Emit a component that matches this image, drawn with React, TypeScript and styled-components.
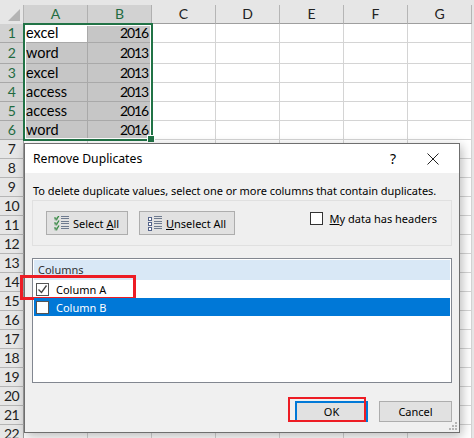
import { createGlobalStyle } from 'styled-components'
import styled from 'styled-components'

const COLS = ['A', 'B', 'C', 'D', 'E', 'F', 'G']
const ROW_HEIGHTS = [19, 21, 19, 19, 19, 19, 19, 19, 19, 19, 19, 19, 19, 19, 19, 19, 19, 19, 19, 19, 19, 19]
const DATA = [
  ['excel', '2016'],
  ['word', '2013'],
  ['excel', '2013'],
  ['access', '2013'],
  ['access', '2016'],
  ['word', '2016'],
]

const Global = createGlobalStyle`
  html, body { margin: 0; padding: 0; background: #fff; overflow: hidden; }
  * { box-sizing: border-box; }
`

const Page = styled.div`
  position: relative;
  width: 474px;
  height: 438px;
  overflow: hidden;
  background: #fff;
`

const Sheet = styled.div`
  display: grid;
  grid-template-columns: 24px repeat(7, 64px) 2px;
  grid-auto-rows: min-content;
  padding-top: 5px;
  background: #e6e6e6;
  font-family: Lato, "Liberation Sans", sans-serif;
`

const Corner = styled.div`
  height: 19px;
  background: #e6e6e6;
  border-right: 1px solid #b5b5b5;
  position: relative;
  &::after {
    content: '';
    position: absolute;
    right: 3px;
    bottom: 3px;
    border-style: solid;
    border-width: 0 0 12px 12px;
    border-color: transparent transparent #b4b4b4 transparent;
  }
`

const ColHead = styled.div<{ $active?: boolean }>`
  height: 19px;
  background: ${p => (p.$active ? '#d2d2d2' : '#e6e6e6')};
  border-right: 1px solid ${p => (p.$active ? '#b0b0b0' : '#b5b5b5')};
  border-bottom: 1px solid ${p => (p.$active ? '#217346' : '#9f9f9f')};
  color: ${p => (p.$active ? '#1f6b41' : '#222')};
  font-size: 14px;
  line-height: 18px;
  text-align: center;
`

const RowHead = styled.div<{ $active?: boolean; $h: number }>`
  height: ${p => p.$h}px;
  background: ${p => (p.$active ? '#d2d2d2' : '#e6e6e6')};
  border-right: 1px solid ${p => (p.$active ? '#217346' : '#9f9f9f')};
  border-bottom: 1px solid ${p => (p.$active ? '#a8a8a8' : '#b5b5b5')};
  color: ${p => (p.$active ? '#1f6b41' : '#222')};
  font-size: 14px;
  letter-spacing: -0.5px;
  line-height: ${p => p.$h - 1}px;
  text-align: center;
`

const Cell = styled.div<{ $h: number; $selected?: boolean; $num?: boolean; $white?: boolean }>`
  height: ${p => p.$h}px;
  padding: 0 3px 0 2px;
  background: ${p => (p.$selected && !p.$white ? '#c6c6c6' : '#fff')};
  border-right: 1px solid ${p => (p.$selected ? '#a9a9a9' : '#d4d4d4')};
  border-bottom: 1px solid ${p => (p.$selected ? '#a9a9a9' : '#d4d4d4')};
  color: #000;
  font-size: ${p => (p.$num ? '14px' : '14.5px')};
  letter-spacing: ${p => (p.$num ? '-1.1px' : '0')};
  line-height: ${p => p.$h - 1}px;
  text-align: ${p => (p.$num ? 'right' : 'left')};
`

const Selection = styled.div`
  position: absolute;
  left: 23px;
  top: 23px;
  width: 130px;
  height: 118px;
  border: 2px solid #217346;
  box-shadow: inset 0 0 0 1px #fff;
  pointer-events: none;
  &::after {
    content: '';
    position: absolute;
    right: -3px;
    bottom: -3px;
    width: 6px;
    height: 6px;
    background: #217346;
    box-shadow: 0 0 0 1px #fff;
  }
`

const Dialog = styled.div`
  position: absolute;
  left: 24px;
  top: 143px;
  width: 436px;
  height: 290px;
  display: flex;
  flex-direction: column;
  background: #f0f0f0;
  border: 1px solid #6f6f6f;
  box-shadow: 2px 3px 10px rgba(0, 0, 0, 0.28);
  font-family: "Noto Sans", "Liberation Sans", sans-serif;
  font-size: 11px;
  color: #000;
`

const TitleBar = styled.div`
  height: 29px;
  flex: none;
  display: flex;
  align-items: center;
  padding: 0 0 0 8px;
  background: #fff;
`

const Title = styled.div`
  flex: 1;
  font-size: 12.2px;
`

const Help = styled.div`
  width: 16px;
  margin-right: 26px;
  text-align: center;
  font-size: 14px;
`

const Close = styled.div`
  width: 12px;
  height: 12px;
  margin-right: 20px;
  display: flex;
`

const Body = styled.div`
  flex: 1;
  display: flex;
  flex-direction: column;
  padding: 8px 7px 0 7px;
`

const Hint = styled.div`
  height: 19px;
  padding-left: 1px;
  letter-spacing: -0.04px;
  line-height: 20px;
  white-space: nowrap;
`

const Group = styled.div`
  height: 46px;
  display: flex;
  align-items: flex-start;
  padding: 10px 0 0 13px;
  background: #efefef;
  border: 1px solid #e0e0e0;
`

const ActionButton = styled.div<{ $w: number }>`
  width: ${p => p.$w}px;
  height: 24px;
  margin-right: 11px;
  display: flex;
  align-items: center;
  gap: 4px;
  padding-left: 7px;
  background: #e1e1e1;
  border: 1px solid #adadad;
  white-space: nowrap;
`

const Headers = styled.label`
  margin-left: auto;
  margin-right: 14px;
  display: flex;
  align-items: center;
  gap: 7px;
  height: 14px;
`

const Box = styled.span<{ $dark?: boolean }>`
  width: 13px;
  height: 13px;
  flex: none;
  display: flex;
  background: #fff;
  border: 1px solid ${p => (p.$dark ? '#333' : '#555')};
`

const Key = styled.span`
  text-decoration: underline;
`

const List = styled.div`
  height: 125px;
  margin-top: 12px;
  padding: 1px;
  background: #fff;
  border: 1px solid #828790;
`

const ListHead = styled.div`
  height: 20px;
  padding-left: 4px;
  background: #d9e8f6;
  color: #333;
  line-height: 20px;
`

const ListRow = styled.div<{ $selected?: boolean }>`
  position: relative;
  height: 18px;
  display: flex;
  align-items: center;
  gap: 7px;
  padding-left: 2px;
  background: ${p => (p.$selected ? '#0078d7' : '#fff')};
  color: ${p => (p.$selected ? '#fff' : '#000')};
`

const RowMark = styled.div`
  position: absolute;
  left: -14px;
  top: -5px;
  width: 116px;
  height: 25px;
  border: 3px solid #ed1c24;
  pointer-events: none;
`

const Footer = styled.div`
  height: 49px;
  display: flex;
  justify-content: flex-end;
  align-items: flex-start;
  gap: 11px;
  padding-top: 18px;
`

const FootButton = styled.div<{ $primary?: boolean }>`
  position: relative;
  width: 73px;
  height: 21px;
  display: flex;
  align-items: center;
  justify-content: center;
  background: #e1e1e1;
  border: ${p => (p.$primary ? '2px solid #0078d7' : '1px solid #adadad')};
`

const OkMark = styled.div`
  position: absolute;
  left: -9px;
  top: -6px;
  width: 78px;
  height: 25px;
  border: 2px solid #ed1c24;
  pointer-events: none;
`

const Grip = styled.svg`
  position: absolute;
  right: 1px;
  bottom: 1px;
`

const SelectIcon = () => (
  <svg width="15" height="15" viewBox="0 0 15 15">
    {[1, 6, 11].map(y => (
      <g key={y}>
        <path d={`M0.5 ${y + 0.5}l2 2 2.5-4`} fill="none" stroke="#2e8b3d" strokeWidth="1.3" />
        <rect x="1" y={y + 1} width="2" height="2" fill="none" stroke="#6f9c76" strokeWidth="0.7" />
        <path d={`M7 ${y - 0.5}h8M7 ${y + 1.5}h8`} stroke="#6f7b8f" strokeWidth="1" />
      </g>
    ))}
  </svg>
)

const UnselectIcon = () => (
  <svg width="15" height="15" viewBox="0 0 15 15">
    {[1, 6, 11].map(y => (
      <g key={y}>
        <rect x="1.5" y={y + 0.5} width="3" height="3" fill="#fff" stroke="#55648a" strokeWidth="1" />
        <path d={`M7 ${y - 0.5}h8M7 ${y + 1.5}h8`} stroke="#6f7b8f" strokeWidth="1" />
      </g>
    ))}
  </svg>
)

function SheetRow({ row, h }: { row: number; h: number }) {
  const selected = row < 6
  return (
    <>
      <RowHead $active={selected} $h={h}>{row + 1}</RowHead>
      {COLS.map((c, i) => {
        const inData = selected && i < 2
        return (
          <Cell key={c} $h={h} $selected={inData} $white={row === 0 && i === 0} $num={i === 1}>
            {inData ? DATA[row][i] : ''}
          </Cell>
        )
      })}
      <span />
    </>
  )
}

export default function App() {
  return (
    <Page>
      <Global />
      <Sheet>
        <Corner />
        {COLS.map((c, i) => (
          <ColHead key={c} $active={i < 2}>{c}</ColHead>
        ))}
        <span />
        {ROW_HEIGHTS.map((h, r) => (
          <SheetRow key={r} row={r} h={h} />
        ))}
      </Sheet>
      <Selection />
      <Dialog>
        <TitleBar>
          <Title>Remove Duplicates</Title>
          <Help>?</Help>
          <Close>
            <svg width="12" height="12" viewBox="0 0 12 12">
              <path d="M.5.5l11 11M11.5.5l-11 11" stroke="#222" strokeWidth="1" />
            </svg>
          </Close>
        </TitleBar>
        <Body>
          <Hint>To delete duplicate values, select one or more columns that contain duplicates.</Hint>
          <Group>
            <ActionButton $w={82}>
              <SelectIcon />
              <span>Select <Key>A</Key>ll</span>
            </ActionButton>
            <ActionButton $w={96}>
              <UnselectIcon />
              <span><Key>U</Key>nselect All</span>
            </ActionButton>
            <Headers>
              <Box $dark />
              <span><Key>M</Key>y data has headers</span>
            </Headers>
          </Group>
          <List>
            <ListHead>Columns</ListHead>
            <ListRow>
              <Box>
                <svg width="11" height="11" viewBox="0 0 11 11">
                  <path d="M1.5 5.5l3 3 5-7" fill="none" stroke="#444" strokeWidth="1.3" />
                </svg>
              </Box>
              Column A
              <RowMark />
            </ListRow>
            <ListRow $selected>
              <Box />
              Column B
            </ListRow>
          </List>
          <Footer>
            <FootButton $primary>
              OK
              <OkMark />
            </FootButton>
            <FootButton>Cancel</FootButton>
          </Footer>
        </Body>
        <Grip width="9" height="9" viewBox="0 0 9 9">
          <path d="M6 0h2v2H6zM3 3h2v2H3zM6 3h2v2H6zM0 6h2v2H0zM3 6h2v2H3zM6 6h2v2H6z" fill="#b5b5b5" />
        </Grip>
      </Dialog>
    </Page>
  )
}
